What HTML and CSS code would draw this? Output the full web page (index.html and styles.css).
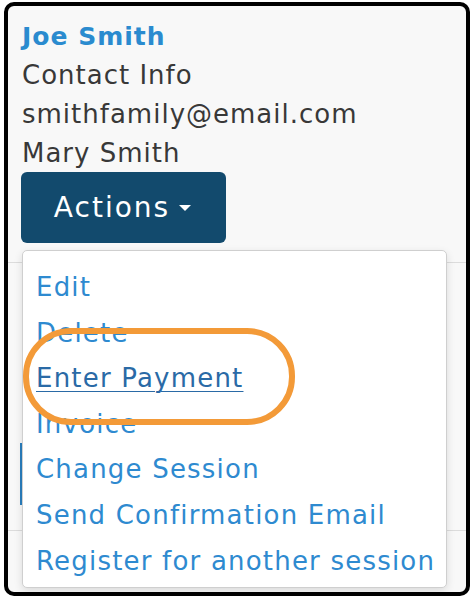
FILE: index.html
```html
<!DOCTYPE html>
<html>
<head>
<meta charset="utf-8">
<link rel="stylesheet" href="styles.css">
</head>
<body>
<div class="frame">
  <div class="card">
    <a class="name">Joe Smith</a>
    <div class="line">Contact Info</div>
    <div class="line">smithfamily@email.com</div>
    <div class="line">Mary Smith</div>
    <button class="actions">Actions <span class="caret"></span></button>
  </div>
  <div class="row row-one">
    <span class="ghost-btn"></span>
  </div>
  <div class="row row-two"></div>

  <ul class="menu">
    <li><a>Edit</a></li>
    <li><a>Delete</a></li>
    <li><a class="hover">Enter Payment</a></li>
    <li><a>Invoice</a></li>
    <li><a>Change Session</a></li>
    <li><a>Send Confirmation Email</a></li>
    <li><a>Register for another session</a></li>
  </ul>
  <div class="highlight"></div>
</div>
</body>
</html>
```
FILE: styles.css
```css
html, body {
  margin: 0;
  padding: 0;
  background: #ffffff;
}
body {
  padding: 2px 0 0 4px;
  font-family: "DejaVu Sans", sans-serif;
}
.frame {
  position: relative;
  box-sizing: border-box;
  width: 466px;
  height: 594px;
  border: 4px solid #000;
  border-radius: 10px;
  background: #f8f8f8;
  overflow: hidden;
}
.card {
  padding: 11px 14px 0 14px;
  height: 256px;
  box-sizing: border-box;
}
.name {
  display: block;
  color: #2a8bcf;
  font-weight: bold;
  font-size: 25px;
  letter-spacing: 1px;
  line-height: 39px;
}
.line {
  color: #383838;
  font-size: 26px;
  letter-spacing: 1px;
  line-height: 39px;
}
.actions {
  margin: -1px 0 0 -1px;
  width: 205px;
  height: 71px;
  border: none;
  border-radius: 6px;
  background: #124a6d;
  color: #fff;
  font-family: inherit;
  font-size: 28px;
  letter-spacing: 2px;
  display: flex;
  align-items: center;
  justify-content: center;
  gap: 9px;
  padding: 0 2px 0 0;
}
.caret {
  width: 0;
  height: 0;
  border-left: 6px solid transparent;
  border-right: 6px solid transparent;
  border-top: 6px solid #fff;
}
.row {
  border-top: 1px solid #dcdcdc;
}
.row-one {
  height: 268px;
  padding-top: 180px;
  box-sizing: border-box;
}
.ghost-btn {
  display: block;
  margin-left: 12px;
  width: 60px;
  height: 62px;
  border-left: 2px solid #2a7fbf;
}
.row-two {
  height: 70px;
}
.menu {
  position: absolute;
  left: 14px;
  top: 244px;
  width: 425px;
  height: 338px;
  box-sizing: border-box;
  margin: 0;
  padding: 14px 0 0 0;
  list-style: none;
  background: #fff;
  border: 1px solid #cfcfcf;
  border-radius: 5px;
  box-shadow: 0 3px 8px rgba(0,0,0,0.12);
}
.menu li {
  height: 45.6px;
  line-height: 45.6px;
}
.menu a {
  color: #2e8ad0;
  font-size: 26px;
  letter-spacing: 1.2px;
  padding-left: 13px;
  white-space: nowrap;
}
.menu a.hover {
  color: #2a6aa6;
  text-decoration: underline;
  text-decoration-thickness: 1px;
  text-underline-offset: 4px;
}
.highlight {
  position: absolute;
  left: 15px;
  top: 322px;
  width: 272px;
  height: 97px;
  box-sizing: border-box;
  border: 6px solid #f39a38;
  border-radius: 48px;
}
```
